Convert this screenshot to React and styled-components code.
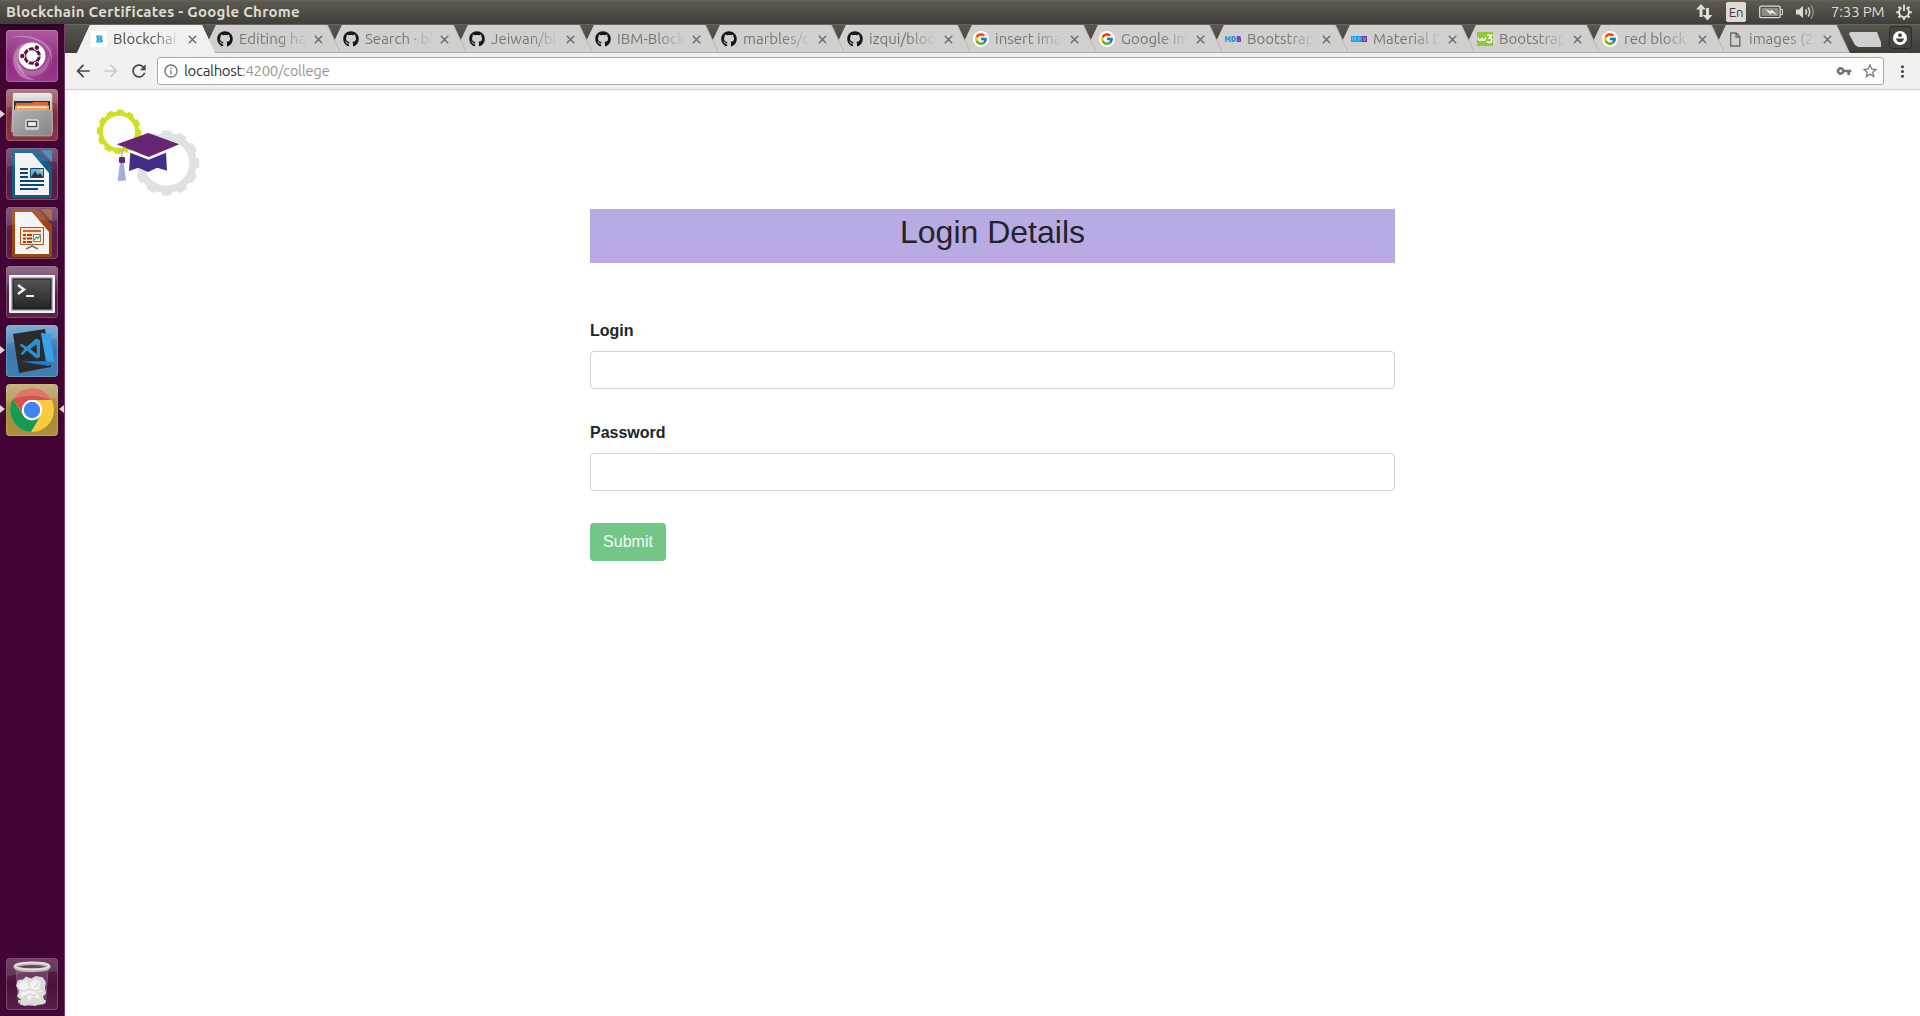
import React from 'react';
import styled, { createGlobalStyle, css } from 'styled-components';
import { FaGithub } from 'react-icons/fa';
import { FcGoogle } from 'react-icons/fc';
import { MdArrowBack, MdArrowForward, MdRefresh, MdInfoOutline, MdVpnKey, MdStarBorder, MdMoreVert } from 'react-icons/md';

const uiFont = '"Ubuntu", "Noto Sans", "Open Sans", sans-serif';

const GlobalStyle = createGlobalStyle`
  *, *::before, *::after { box-sizing: border-box; }
  body { margin: 0; background: #fff; overflow: hidden; }
  svg { display: block; flex: none; }
`;

const Desktop = styled.div`
  display: flex;
  flex-direction: column;
  width: 1920px;
  height: 1016px;
  font-family: ${uiFont};
`;

/* ---------- top panel ---------- */

const TopPanel = styled.header`
  display: flex;
  align-items: center;
  height: 24px;
  padding: 0 8px 0 6px;
  background: linear-gradient(#66645a 0, #5a584f 2px, #3f3e39 100%);
  color: #dfdbd2;
`;

const WindowTitle = styled.div`
  flex: 1;
  font-size: 15px;
  font-weight: 700;
  line-height: 22px;
  white-space: nowrap;
  letter-spacing: 0.27px;
`;

const Tray = styled.div`
  display: flex;
  align-items: center;
  gap: 13px;
`;

const Keyboard = styled.div`
  width: 20px;
  height: 20px;
  border-radius: 2px;
  background: #dfdbd2;
  color: #3c3b37;
  font-size: 13px;
  line-height: 20px;
  text-align: center;
`;

const Clock = styled.div`
  width: 52px;
  margin-left: 2px;
  font-size: 15px;
  line-height: 22px;
  letter-spacing: -0.15px;
  white-space: nowrap;
`;

const Main = styled.div`
  display: flex;
  flex: 1;
  min-height: 0;
`;

/* ---------- launcher ---------- */

const Launcher = styled.nav`
  display: flex;
  flex-direction: column;
  gap: 7px;
  width: 65px;
  padding: 6px 0 6px 6px;
  background: linear-gradient(#2e0224 0, #420533 8px, #430534 100%);
  border-right: 1px solid #7d3a6c;
`;

const Tile = styled.div`
  position: relative;
  width: 52px;
  height: 52px;
  border-radius: 4px;
  background: ${(p) => p.$bg};
  box-shadow: inset 0 0 0 1px rgba(255, 255, 255, 0.2), 0 0 2px rgba(0, 0, 0, 0.35);
  ${(p) => p.$last && css`margin-top: auto;`}
`;

const Pip = styled.i`
  position: absolute;
  top: 21px;
  ${(p) => (p.$right ? 'right: -6px;' : 'left: -6px;')}
  border: solid transparent;
  border-width: 4px 0;
  ${(p) => (p.$right ? 'border-right: 5px solid #d8d4d6;' : 'border-left: 5px solid #d8d4d6;')}
`;

/* ---------- browser ---------- */

const Browser = styled.div`
  display: flex;
  flex-direction: column;
  flex: 1;
  min-width: 0;
`;

const TabStrip = styled.div`
  display: flex;
  height: 29px;
  padding: 1px 8px 0 12px;
  background: linear-gradient(#5a584f, #3e3d38);
  box-shadow: inset 0 1px #68665b;
`;

const slant = 'polygon(0 100%, 13px 0, calc(100% - 13px) 0, 100% 100%)';

const TabBox = styled.div`
  position: relative;
  z-index: ${(p) => p.$z};
  display: flex;
  align-items: center;
  flex: none;
  width: ${(p) => p.$width}px;
  height: 28px;
  margin-right: -12px;
  padding-left: 14px;
  color: ${(p) => (p.$active ? '#4d4c4a' : '#777673')};

  &::before, &::after {
    content: '';
    position: absolute;
    z-index: -1;
    inset: 0;
    clip-path: ${slant};
    background: ${(p) => (p.$active ? '#f2f1f0' : '#acaaa8')};
  }
  &::after {
    inset: ${(p) => (p.$active ? '0' : '0 1px 1px 0')};
    background: ${(p) => (p.$active ? '#f2f1f0' : '#d1d0ce')};
  }
`;

const Favicon = styled.span`
  display: flex;
  align-items: center;
  justify-content: center;
  flex: none;
  width: 16px;
  height: 16px;
  background: ${(p) => p.$bg || 'transparent'};
  border-radius: ${(p) => p.$radius || 0};
`;

const TabTitle = styled.span`
  width: ${(p) => p.$width}px;
  margin: 0 5px 0 6px;
  white-space: nowrap;
  font-size: 15px;
  line-height: 22px;
  mask-image: linear-gradient(90deg, #000 calc(100% - 30px), transparent calc(100% - 2px));
`;

const NewTab = styled.span`
  width: 33px;
  height: 15px;
  margin: 7px 8px 0 11px;
  background: #d1d0ce;
  clip-path: polygon(0 2px, 1px 0, 28px 0, 33px 13px, 32px 15px, 9px 15px, 6px 13px);
`;

const ProfileButton = styled.span`
  display: flex;
  align-items: center;
  justify-content: center;
  width: 24px;
  height: 23px;
  margin-top: 1px;
  border: 1px solid #2d2c28;
  border-radius: 3px;
  background: #45443f;
`;

const Toolbar = styled.div`
  display: flex;
  align-items: center;
  height: 37px;
  padding: 0 8px 0 8px;
  background: #f2f1f0;
  border-bottom: 1px solid #cfcdcb;
  color: #4a4a4a;
`;

const NavIcon = styled.span`
  display: flex;
  margin-right: ${(p) => p.$gap}px;
  color: ${(p) => (p.$off ? '#cdcccb' : '#484746')};
`;

const AddressBar = styled.div`
  display: flex;
  align-items: center;
  flex: 1;
  height: 28px;
  margin-right: 9px;
  padding: 0 4px 0 5px;
  background: #fff;
  border: 1px solid #acaaa8;
  border-radius: 3px;
  color: #737373;
`;

const Url = styled.span`
  flex: 1;
  margin-left: 5px;
  font-size: 15px;
  line-height: 20px;
  letter-spacing: -0.33px;
  color: #969696;
  b { font-weight: 400; color: #333; }
`;

const KeySlot = styled.span`
  margin-right: 9px;
`;

/* ---------- page ---------- */

const Page = styled.main`
  flex: 1;
  padding: 10px 25px;
  background: #fff;
  font-family: "Liberation Sans", Arial, sans-serif;
  font-size: 16px;
  line-height: 24px;
  color: #212529;
`;

const LoginForm = styled.form`
  width: 805px;
  margin: 9px 0 0 500px;
`;

const Heading = styled.h2`
  height: 54px;
  margin: 0 0 56px;
  padding-top: 4px;
  background: #b9aae3;
  font-size: 32px;
  font-weight: 500;
  line-height: 38.4px;
  text-align: center;
`;

const Field = styled.label`
  display: block;
  margin-bottom: 32px;
  font-weight: 700;
`;

const Input = styled.input`
  display: block;
  width: 100%;
  height: 38px;
  margin-top: 8px;
  border: 1px solid #ced4da;
  border-radius: 4px;
  background: #fff;
`;

const Submit = styled.button`
  display: block;
  width: 76px;
  height: 38px;
  padding: 0;
  border: 0;
  border-radius: 4px;
  background: #74c686;
  color: #f4fbf5;
  font: 400 16px/24px "Liberation Sans", Arial, sans-serif;
`;

/* ---------- drawings ---------- */

function gearPath(cx, cy, root, tip, hole, teeth, phase) {
  const step = (Math.PI * 2) / teeth;
  const at = (r, a) => `${(cx + r * Math.cos(a)).toFixed(1)} ${(cy + r * Math.sin(a)).toFixed(1)}`;
  let d = '';
  for (let i = 0; i < teeth; i += 1) {
    const a = i * step + phase;
    d += `${i ? 'L' : 'M'}${at(root, a - step * 0.33)}L${at(tip, a - step * 0.27)}`;
    d += `A${tip} ${tip} 0 0 1 ${at(tip, a + step * 0.27)}L${at(root, a + step * 0.33)}`;
    d += `A${root} ${root} 0 0 1 ${at(root, a + step * 0.67)}`;
  }
  return `${d}Z M${cx + hole} ${cy}A${hole} ${hole} 0 1 0 ${cx - hole} ${cy}A${hole} ${hole} 0 1 0 ${cx + hole} ${cy}Z`;
}

const Logo = () => (
  <svg width="115" height="100" viewBox="0 0 345 300">
    <path fill="#d0df26" fillRule="evenodd" d={gearPath(87, 95.5, 61, 67, 48, 12, 0.06)} />
    <path fill="#e0e1e3" fillRule="evenodd" d={gearPath(230, 189, 90, 98, 68, 12, 0)} />
    <path fill="#fff" d="m113 149 63 25 61-25-4 14-1 8-1-12-55 22-55-22-3 10z" />
    <path fill="#662673" d="m80 133 95-34 93 34-92 38z" />
    <path fill="#432d87" d="m121 158 55 21 52-21 3 54-29-9-28 13-29-13-28 10z" />
    <path fill="none" stroke="#a5aedb" strokeWidth="4" d="M104 140q-8 11-9 32" />
    <path fill="#a3add9" d="M90 188h11l7 54-7-1-3 3-4-3-4 3-7-2z" />
    <rect x="87" y="171" width="18" height="18" rx="3" fill="#662673" />
  </svg>
);

const Gloss = () => (
  <path d="M1 4q0-3 3-3h44q3 0 3 3v10Q26 11 1 19z" fill="#fff" opacity=".12" />
);

const UbuntuIcon = () => (
  <svg width="52" height="52" viewBox="0 0 52 52">
    <defs>
      <radialGradient id="dash"><stop offset="0" stopColor="#d9a5cf" /><stop offset="1" stopColor="#a13f91" stopOpacity="0" /></radialGradient>
    </defs>
    <circle cx="26" cy="27" r="25" fill="url(#dash)" />
    <path d="M2 8Q28 4 40 17q8 10 4 22 6-19-7-27Q22 2 2 8zM7 31q3 20 22 19-13-4-15-17-1-13 8-21Q7 17 7 31z" fill="#fff" opacity=".3" />
    <path d="M45 11q0 29-21 29-10-1-14-9 3 15 18 15 19-1 17-35z" fill="#fff" opacity=".18" />
    <circle cx="26" cy="27" r="14" fill="#6d1f5d" opacity=".5" />
    <circle cx="26" cy="26" r="13.5" fill="#fff" />
    <circle cx="26" cy="26" r="7.3" fill="none" stroke="#5d1149" strokeWidth="3" />
    {[180, 300, 60].map((a) => (
      <g key={a} transform={`rotate(${a} 26 26)`}>
        <circle cx="35.7" cy="26" r="3.1" fill="#fff" />
        <circle cx="35.7" cy="26" r="2.2" fill="#5d1149" />
      </g>
    ))}
    {[0, 120, 240].map((a) => (
      <path key={a} transform={`rotate(${a} 26 26)`} d="M31 26h5" stroke="#fff" strokeWidth="1.2" />
    ))}
  </svg>
);

const FilesIcon = () => (
  <svg width="52" height="52" viewBox="0 0 52 52">
    <defs>
      <linearGradient id="drawer" x2="1" y2="1"><stop stopColor="#b2b2b2" /><stop offset="1" stopColor="#858585" /></linearGradient>
      <linearGradient id="lid" x2="0" y2="1"><stop stopColor="#eee" /><stop offset=".25" stopColor="#ccc" /><stop offset="1" stopColor="#999" /></linearGradient>
    </defs>
    <Gloss />
    <path d="M7 5q0-1 2-1h34q3 0 3 2l1 37H5z" fill="url(#lid)" />
    <path d="M8 12h36v10H8z" fill="#3b302a" />
    <path d="M10 15q0-1 1-1h15l1-1h14q1 0 1 1v8H10z" fill="#d9663a" />
    <path d="M9 16.500h34V22H9z" fill="#f0a050" />
    <path d="M11 17.500h30V19H11z" fill="#fff0dc" />
    <path d="M7 23q0-2 2-2h35q2 0 2 2v22q0 2-2 2H9q-2 0-2-2z" fill="url(#drawer)" stroke="#c4c4c4" strokeWidth=".6" />
    <rect x="19" y="30" width="14" height="11" rx="2.5" fill="#cfcfcf" />
    <rect x="21.500" y="32.500" width="9" height="5" fill="#eee" stroke="#444" strokeWidth="1.2" />
  </svg>
);

const OfficePage = ({ edge, fold, children }) => (
  <svg width="52" height="52" viewBox="0 0 52 52">
    <path d="M8 2h23l15 16v30q0 2-2 2H8q-2 0-2-2V4q0-2 2-2z" fill={edge} />
    <path d="M34.500 2H44q2 0 2 2v10.500z" fill={fold} />
    <path d="M9 5h17l17 20v22H9z" fill="#f3f3f3" />
    {children}
    <Gloss />
  </svg>
);

const WriterIcon = () => (
  <OfficePage edge="#0d5c8b" fold="#2f84b3">
    <path d="M14 21h8M14 25h8M14 29h8M14 33h24M14 37h24M14 41h18" stroke="#0a4a70" strokeWidth="2" />
    <path d="M24.5 20.500h13v9h-13z" fill="#6bb6e3" stroke="#0a4a70" />
    <path d="m25 29 4-6 3 4 2-2 3 4z" fill="#333" />
    <circle cx="35.500" cy="22.500" r="1.600" fill="#f0c63a" />
  </OfficePage>
);

const ImpressIcon = () => (
  <OfficePage edge="#9c4613" fold="#a9572a">
    <path d="M14.500 20.500h23v17h-23z" fill="#fbe7d4" stroke="#b5501b" />
    <path d="M17 24h18" stroke="#d2622a" strokeWidth="2" />
    <path d="M17 28h3m1 0h5M17 31.500h3m1 0h5M17 35h3m1 0h5" stroke="#a0400f" strokeWidth="2" />
    <path d="M27.500 27.500h7v7h-7z" fill="#fff" stroke="#777" />
    <path d="m28.500 33 2-3 1.500 1.500 2-3" fill="none" stroke="#3c9a2c" strokeWidth="1.200" />
    <path d="M26 37v3m0-1-6 3m6-3 6 3" stroke="#777" strokeWidth="1.800" />
  </OfficePage>
);

const TerminalIcon = () => (
  <svg width="52" height="52" viewBox="0 0 52 52">
    <defs><linearGradient id="crt" x2="0" y2="1"><stop stopColor="#555" /><stop offset="1" stopColor="#242424" /></linearGradient></defs>
    <Gloss />
    <rect x="3" y="9" width="46" height="38" rx="1" fill="#f1f1f1" />
    <rect x="5" y="11" width="42" height="34" fill="#b4b4b4" />
    <rect x="7" y="13" width="38" height="30" fill="url(#crt)" stroke="#151515" />
    <path d="m12 19 6 4.500-6 4.500" fill="none" stroke="#eee" strokeWidth="2.600" />
    <path d="M20 30h8" stroke="#eee" strokeWidth="2" />
  </svg>
);

const CodeIcon = () => (
  <svg width="52" height="52" viewBox="0 0 52 52">
    <Gloss />
    <path d="m7 9 32-5 6 38-32 6z" fill="#2b2b2d" />
    <path d="m35 8 9.500 1.500L48 37l-5.500 4L15 36.500l25-.5z" fill="#1a7fd2" />
    <path d="m35 8 9.500 1.500L48 37l-8-1z" fill="#3ba0ea" />
    <path fillRule="evenodd" d="m30 13.500 4 1.500v17l-3.500 1.500-9.500-8-4.500 4.500-2-1 4-5-5-4 2-1.500 5 3.500zm.5 6-6.500 4.500 7 5z" fill="#2c8fd3" />
  </svg>
);

const ChromeIcon = () => (
  <svg width="52" height="52" viewBox="0 0 52 52">
    <Gloss />
    <circle cx="26" cy="26" r="22" fill="#fbc93d" />
    <path d="M7 15A22 22 0 0 1 45.500 16H26A10 10 0 0 0 17 30z" fill="#d6534b" />
    <path d="M7 15A22 22 0 0 0 25 48L34.500 31.500A10 10 0 0 1 17 31z" fill="#159a58" />
    <circle cx="26" cy="26" r="10.200" fill="#fff" />
    <circle cx="26" cy="26" r="8.200" fill="#4285f4" />
    <path d="M7 15A22 22 0 0 1 45.500 16Q26 8 7 15z" fill="#fff" opacity=".2" />
  </svg>
);

const TrashIcon = () => (
  <svg width="52" height="52" viewBox="0 0 52 52">
    <Gloss />
    <path d="m10 11 2.500 34q13.500 5 27 0L42 11z" fill="#a583a0" opacity=".35" stroke="#d8c6d4" strokeWidth="1" />
    <path d="M12 42h28l-.5 3q-13.500 5-27 0z" fill="#c9c9c7" />
    <path d="m12 22 5-.5 3-3 5 2 5-2.500 7 1.500 3 5-1 5 1 6-3 3 2 6-2 2-4-1-4 2.500-5-2-5 2-5-1.500 1-5-4-3 2-5-3-6z" fill="#dbdbd9" />
    <path d="m15 24 5-2 4 3 5-4 6 3-2 5 4 4-5 2 2 6-7-2-4 3-3-4-6 1 2-6-4-4z" fill="#f1f1ef" />
    <path d="m12 31 6 2 5-2 6 2 8-2M18 39l5-3 5 2 5-4M22 24l2 5M33 25l-4 4" fill="none" stroke="#c2c2bf" strokeWidth=".8" />
    <ellipse cx="26" cy="8.800" rx="16.800" ry="3.600" fill="#6a4461" stroke="#b9b9b7" strokeWidth="3.600" />
    <ellipse cx="26" cy="8" rx="17.200" ry="3.400" fill="none" stroke="#e2e2e0" strokeWidth="1.600" />
  </svg>
);

const NetworkIcon = () => (
  <svg width="18" height="18" viewBox="0 0 18 18" fill="#dfdbd2">
    <path d="M6 1l5 5.500H7.500V14h-3V6.500H1zM12.500 17.500l-5-5.500H11V5h3v7h3.500z" />
  </svg>
);

const BatteryIcon = () => (
  <svg width="24" height="14" viewBox="0 0 24 14">
    <rect x=".7" y="1.200" width="20.500" height="11.500" rx="1.500" fill="none" stroke="#dfdbd2" strokeWidth="1.300" />
    <rect x="2.500" y="3" width="17" height="8" fill="#8d8b84" />
    <path d="M22 4.500h1.500v5H22" fill="none" stroke="#dfdbd2" />
    <path d="M6 4l5.500 2.300 1-1.800L18 10l-5.500-2.300-1 1.800z" fill="#f0ede6" />
  </svg>
);

const VolumeIcon = () => (
  <svg width="20" height="16" viewBox="0 0 20 16">
    <path d="M0 5.500h3L7 2v12l-4-3.500H0z" fill="#dfdbd2" />
    <path d="M9.500 5.500q2 2.500 0 5M12 3.500q3.500 4.500 0 9" fill="none" stroke="#dfdbd2" strokeWidth="1.500" />
    <path d="M15 1.500q4.500 6.500 0 13" fill="none" stroke="#908d85" strokeWidth="1.500" />
  </svg>
);

const SessionIcon = () => (
  <svg width="16" height="18" viewBox="0 0 16 18">
    <path d="M5.500 4.800A5 5 0 1 0 10.500 4.800" fill="none" stroke="#dfdbd2" strokeWidth="1.900" />
    <path d="M8 1.500v6.500" stroke="#dfdbd2" strokeWidth="1.900" />
    {[-45, 0, 45, 90, 135, 180, 225].map((a) => (
      <path key={a} transform={`rotate(${a} 8 9.200)`} d="M13 9.200h2.700" stroke="#dfdbd2" strokeWidth="2.400" />
    ))}
  </svg>
);

const CloseIcon = () => (
  <svg width="9" height="9" viewBox="0 0 9 9">
    <path d="M.8.8l7.400 7.400M8.200.8.800 8.200" stroke="#6f6e6c" strokeWidth="1.500" />
  </svg>
);

const ProfileIcon = () => (
  <svg width="14" height="14" viewBox="0 0 14 14">
    <circle cx="7" cy="7" r="7" fill="#fff" />
    <circle cx="7" cy="4.200" r="1.900" fill="#45443f" />
    <path d="M3 7.500h8q-.5 3.500-4 3.700Q3.500 11 3 7.500z" fill="#45443f" />
  </svg>
);

const BitIcon = () => (
  <svg width="7" height="8" viewBox="0 0 8 8">
    <path d="M0 0h6q1.500 0 1.500 2L7 4l1 1.500Q8 8 6 8H0l1-4z" fill="#2ba8df" />
    <path d="M3 2.500h2M3 5.500h2.500" stroke="#a5dcf3" strokeWidth="1" />
  </svg>
);

const MdbIcon = () => (
  <svg width="16" height="6" viewBox="0 0 16 6" fill="none" strokeWidth="1.600">
    <path d="M.8 6V.5l2 3 2-3V6" stroke="#2ca7e4" />
    <path d="M7.300.8v4.400h.7q2.200-.2 2.200-2.200T8 .8z" stroke="#3d8fd9" />
    <path d="M12.500.8v4.400h2.700V3h-2.700 2.300V.8z" stroke="#6247bd" />
  </svg>
);

const MaterialIcon = () => (
  <svg width="16" height="6" viewBox="0 0 16 6" fill="none">
    <path d="M0 0h6v6H0z" fill="#17a9f2" /><path d="M6 0h5v6H6z" fill="#2196f3" /><path d="M11 0h5v6h-5z" fill="#66409b" />
    <path d="M1.500 4.500v-3l1.500 1.500 1.500-1.500v3M7.500 1.500v3q2 0 2-1.500t-2-1.500z" stroke="#6cc5f4" strokeWidth=".8" />
    <path d="M12.500 1.500h2v3h-2zm0 1.500h2" stroke="#a287cb" strokeWidth=".8" />
  </svg>
);

const W3Icon = () => (
  <svg width="16" height="16" viewBox="0 0 16 16">
    <rect y="1" width="16" height="14" fill="#8dc63f" />
    <path d="M1 6.500q.5 3 2 2.800T4.800 6.800q.3 2.600 2 2.500T8.500 6M10 4.300h4.500L12.300 7q2.500-.2 2.500 2t-2.300 2.500q-1.500 0-2.500-1" fill="none" stroke="#fff" strokeWidth="1.500" />
  </svg>
);

const DocIcon = () => (
  <svg width="12" height="15" viewBox="0 0 12 15">
    <path d="M1.700 1h5.500L10.800 4.700V14H1.700zM7 1v4h3.800" fill="none" stroke="#6a6967" strokeWidth="1.300" />
  </svg>
);

const favicons = {
  bit: <Favicon $bg="#fff"><BitIcon /></Favicon>,
  github: <Favicon><FaGithub size={16} color="#171515" /></Favicon>,
  google: <Favicon $bg="#fff" $radius="50%"><FcGoogle size={14} /></Favicon>,
  mdb: <Favicon><MdbIcon /></Favicon>,
  material: <Favicon><MaterialIcon /></Favicon>,
  w3: <Favicon><W3Icon /></Favicon>,
  doc: <Favicon><DocIcon /></Favicon>,
};

const tabs = [
  ['bit', 'Blockchai'],
  ['github', 'Editing ha'],
  ['github', 'Search · bl'],
  ['github', 'Jeiwan/bl'],
  ['github', 'IBM-Block'],
  ['github', 'marbles/c'],
  ['github', 'izqui/bloc'],
  ['google', 'insert ima'],
  ['google', 'Google Im'],
  ['mdb', 'Bootstrap'],
  ['material', 'Material D'],
  ['w3', 'Bootstrap'],
  ['google', 'red block'],
  ['doc', 'images (2'],
];

const apps = [
  { name: 'dash', bg: 'linear-gradient(#ad5a9f, #8e2c7f 60%, #9b3a8c)', icon: <UbuntuIcon /> },
  { name: 'files', bg: 'linear-gradient(#a4686f, #7d2b3a 50%, #893444)', icon: <FilesIcon />, running: true },
  { name: 'writer', bg: 'linear-gradient(#703f65, #541a44 55%, #5c224b)', icon: <WriterIcon /> },
  { name: 'impress', bg: 'linear-gradient(#703f65, #541a44 55%, #5c224b)', icon: <ImpressIcon /> },
  { name: 'terminal', bg: 'linear-gradient(#81587a, #561b47 60%, #5c224b)', icon: <TerminalIcon /> },
  { name: 'code', bg: 'linear-gradient(#6ba2cc, #3b79ae 50%, #417fb3)', icon: <CodeIcon />, running: true },
  { name: 'chrome', bg: 'linear-gradient(#bfa873, #a88a37 50%, #ad903d)', icon: <ChromeIcon />, running: true, focused: true },
  { name: 'trash', bg: 'linear-gradient(#5f2551, #4c103d 50%, #57204a)', icon: <TrashIcon />, last: true },
];

export default function App() {
  return (
    <Desktop>
      <GlobalStyle />
      <TopPanel>
        <WindowTitle>Blockchain Certificates - Google Chrome</WindowTitle>
        <Tray>
          <NetworkIcon />
          <Keyboard>En</Keyboard>
          <BatteryIcon />
          <VolumeIcon />
          <Clock>7:33 PM</Clock>
          <SessionIcon />
        </Tray>
      </TopPanel>
      <Main>
        <Launcher>
          {apps.map((app) => (
            <Tile key={app.name} $bg={app.bg} $last={app.last}>
              {app.icon}
              {app.running && <Pip />}
              {app.focused && <Pip $right />}
            </Tile>
          ))}
        </Launcher>
        <Browser>
          <TabStrip>
            {tabs.map(([icon, title], i) => (
              <TabBox key={i} $active={i === 0} $z={20 - i} $width={i > 10 ? 137 : 138}>
                {favicons[icon]}
                <TabTitle $width={i > 10 ? 69 : 70}>{title}</TabTitle>
                <CloseIcon />
              </TabBox>
            ))}
            <NewTab />
            <ProfileButton><ProfileIcon /></ProfileButton>
          </TabStrip>
          <Toolbar>
            <NavIcon $gap={8}><MdArrowBack size={20} /></NavIcon>
            <NavIcon $gap={8} $off><MdArrowForward size={20} /></NavIcon>
            <NavIcon $gap={8}><MdRefresh size={20} /></NavIcon>
            <AddressBar>
              <MdInfoOutline size={16} />
              <Url><b>localhost</b>:4200/college</Url>
              <KeySlot><MdVpnKey size={16} /></KeySlot>
              <MdStarBorder size={18} />
            </AddressBar>
            <MdMoreVert size={19} />
          </Toolbar>
          <Page>
            <Logo />
            <LoginForm>
              <Heading>Login Details</Heading>
              <Field>Login<Input /></Field>
              <Field>Password<Input type="password" /></Field>
              <Submit type="button">Submit</Submit>
            </LoginForm>
          </Page>
        </Browser>
      </Main>
    </Desktop>
  );
}
